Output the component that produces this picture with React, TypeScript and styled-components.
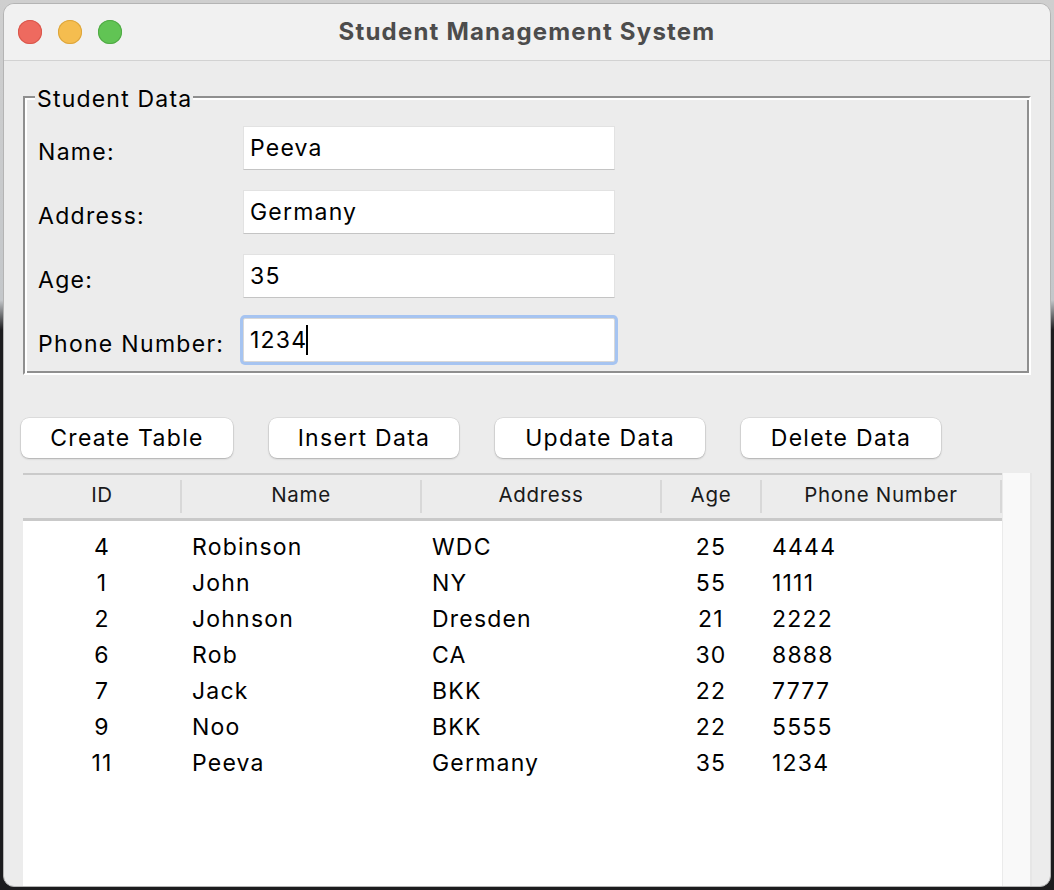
import React from "react";
import styled, { createGlobalStyle } from "styled-components";

const GlobalStyle = createGlobalStyle`
  html, body {
    margin: 0;
    padding: 0;
    background: #c9c9c9;
    font-family: Inter, "Noto Sans", "Liberation Sans", sans-serif;
    -webkit-font-smoothing: antialiased;
  }
  * { box-sizing: border-box; }
`;

const Desktop = styled.div`
  width: 1054px;
  height: 890px;
  padding: 3px;
  background: linear-gradient(to bottom, #cfcfcf 0px, #c4c7ca 300px, #1c1c1e 330px, #1c1c1e 890px);
`;

const Window = styled.div`
  width: 1048px;
  height: 884px;
  border-radius: 11px;
  overflow: hidden;
  background: #ececec;
  border: 1px solid #b4b4b4;
  display: flex;
  flex-direction: column;
`;

const TitleBar = styled.div`
  height: 57px;
  flex: none;
  background: #f1f1f1;
  border-bottom: 1px solid #d2d2d2;
  display: grid;
  grid-template-columns: 1fr auto 1fr;
  align-items: center;
  padding: 0 14px;
`;

const Lights = styled.div`
  display: flex;
  gap: 16px;
  align-items: center;
`;

const Light = styled.span<{ $c: string; $b: string }>`
  width: 24px;
  height: 24px;
  border-radius: 50%;
  background: ${(p) => p.$c};
  box-shadow: inset 0 0 0 1px ${(p) => p.$b};
`;

const Title = styled.div`
  font-size: 24px;
  font-weight: 700;
  color: #4c4c4c;
  letter-spacing: 1.2px;
  margin-top: -1px;
`;

const Content = styled.div`
  flex: 1;
  display: flex;
  flex-direction: column;
  padding: 20px 19px 0 18px;
  min-height: 0;
`;

const Group = styled.fieldset`
  margin: 0 0 0 1px;
  padding: 13px 12px 11px 13px;
  border-style: solid;
  border-width: 2px;
  border-color: #8f8f8f #ffffff #ffffff #8f8f8f;
  box-shadow: inset 2px 2px 0 #ffffff, inset -2px -2px 0 #8f8f8f;
  display: grid;
  grid-template-columns: 205px 372px;
  row-gap: 20px;
  align-items: center;
`;

const Legend = styled.legend`
  font-size: 23px;
  line-height: 28px;
  letter-spacing: 1.2px;
  color: #000;
  padding: 4px 1px 0 2px;
  margin-left: -3px;
  background: #ececec;
`;

const Label = styled.div`
  font-size: 23px;
  letter-spacing: 1.3px;
  color: #000;
  padding-top: 7px;
  white-space: nowrap;
`;

const Entry = styled.div<{ $focus?: boolean }>`
  height: 44px;
  background: #fff;
  border: 1px solid #e2e2e2;
  border-bottom-color: #c4c4c4;
  font-size: 23px;
  letter-spacing: 1.2px;
  color: #000;
  display: flex;
  align-items: center;
  padding-left: 6px;
  ${(p) =>
    p.$focus
      ? `
    border-color: #d8d8d8;
    border-radius: 2px;
    box-shadow: 0 0 0 3px #a6c4f1;
  `
      : ""}
`;

const Caret = styled.span`
  display: inline-block;
  width: 2px;
  height: 30px;
  background: #000;
  margin-left: -1px;
`;

const ButtonRow = styled.div`
  display: flex;
  gap: 36px;
  margin: 43px 0 0 -1px;
`;

const Button = styled.button<{ $w: number }>`
  width: ${(p) => p.$w}px;
  height: 40px;
  border: none;
  border-radius: 8px;
  background: #fff;
  box-shadow: 0 0 0 0.5px rgba(0, 0, 0, 0.12), 0 1px 2px rgba(0, 0, 0, 0.22);
  font-family: inherit;
  font-size: 23px;
  letter-spacing: 1.3px;
  color: #000;
  padding: 0 0 1px;
  cursor: default;
`;

const TableArea = styled.div`
  flex: 1;
  margin-top: 15px;
  margin-left: 1px;
  margin-right: -1px;
  display: flex;
  min-height: 0;
`;

const Table = styled.div`
  width: 980px;
  display: flex;
  flex-direction: column;
  background: #fff;
`;

const HeaderRow = styled.div`
  display: grid;
  grid-template-columns: 158px 240px 240px 100px 240px;
  height: 48px;
  background: #ececec;
  border-top: 2px solid #cacaca;
  border-bottom: 3px solid #c9c9c9;
`;

const HeadCell = styled.div`
  font-size: 20.5px;
  letter-spacing: 0.7px;
  color: #1a1a1a;
  display: flex;
  align-items: center;
  justify-content: center;
  padding-bottom: 5px;
  position: relative;
  &::after {
    content: "";
    position: absolute;
    right: -1px;
    top: 5px;
    bottom: 5px;
    width: 2px;
    background: #d8d8d8;
  }
`;

const Body = styled.div`
  padding-top: 8px;
  flex: 1;
`;

const Row = styled.div`
  display: grid;
  grid-template-columns: 158px 240px 240px 100px 240px;
  height: 36px;
  align-items: center;
`;

const Cell = styled.div<{ $center?: boolean }>`
  font-size: 23px;
  letter-spacing: 1.2px;
  color: #000;
  text-align: ${(p) => (p.$center ? "center" : "left")};
  padding-left: ${(p) => (p.$center ? "0" : "11px")};
  white-space: nowrap;
`;

const Scrollbar = styled.div`
  width: 30px;
  background: #f9f9f9;
  border-left: 1px solid #ebebeb;
  border-right: 2px solid #e6e6e6;
`;

const fields = [
  { label: "Name:", value: "Peeva" },
  { label: "Address:", value: "Germany" },
  { label: "Age:", value: "35" },
  { label: "Phone Number:", value: "1234", focus: true },
];

const buttons = [
  { text: "Create Table", w: 212 },
  { text: "Insert Data", w: 190 },
  { text: "Update Data", w: 210 },
  { text: "Delete Data", w: 200 },
];

const headers = ["ID", "Name", "Address", "Age", "Phone Number"];

const rows = [
  ["4", "Robinson", "WDC", "25", "4444"],
  ["1", "John", "NY", "55", "1111"],
  ["2", "Johnson", "Dresden", "21", "2222"],
  ["6", "Rob", "CA", "30", "8888"],
  ["7", "Jack", "BKK", "22", "7777"],
  ["9", "Noo", "BKK", "22", "5555"],
  ["11", "Peeva", "Germany", "35", "1234"],
];

export default function App() {
  return (
    <>
      <GlobalStyle />
      <Desktop>
        <Window>
          <TitleBar>
            <Lights>
              <Light $c="#ee6a5f" $b="#d9574c" />
              <Light $c="#f5bd4f" $b="#dca53c" />
              <Light $c="#61c454" $b="#50a945" />
            </Lights>
            <Title>Student Management System</Title>
            <div />
          </TitleBar>
          <Content>
            <Group>
              <Legend>Student Data</Legend>
              {fields.map((f) => (
                <React.Fragment key={f.label}>
                  <Label>{f.label}</Label>
                  <Entry $focus={f.focus}>
                    {f.value}
                    {f.focus && <Caret />}
                  </Entry>
                </React.Fragment>
              ))}
            </Group>
            <ButtonRow>
              {buttons.map((b) => (
                <Button key={b.text} $w={b.w}>
                  {b.text}
                </Button>
              ))}
            </ButtonRow>
            <TableArea>
              <Table>
                <HeaderRow>
                  {headers.map((h) => (
                    <HeadCell key={h}>{h}</HeadCell>
                  ))}
                </HeaderRow>
                <Body>
                  {rows.map((r) => (
                    <Row key={r[0]}>
                      <Cell $center>{r[0]}</Cell>
                      <Cell>{r[1]}</Cell>
                      <Cell>{r[2]}</Cell>
                      <Cell $center>{r[3]}</Cell>
                      <Cell>{r[4]}</Cell>
                    </Row>
                  ))}
                </Body>
              </Table>
              <Scrollbar />
            </TableArea>
          </Content>
        </Window>
      </Desktop>
    </>
  );
}
